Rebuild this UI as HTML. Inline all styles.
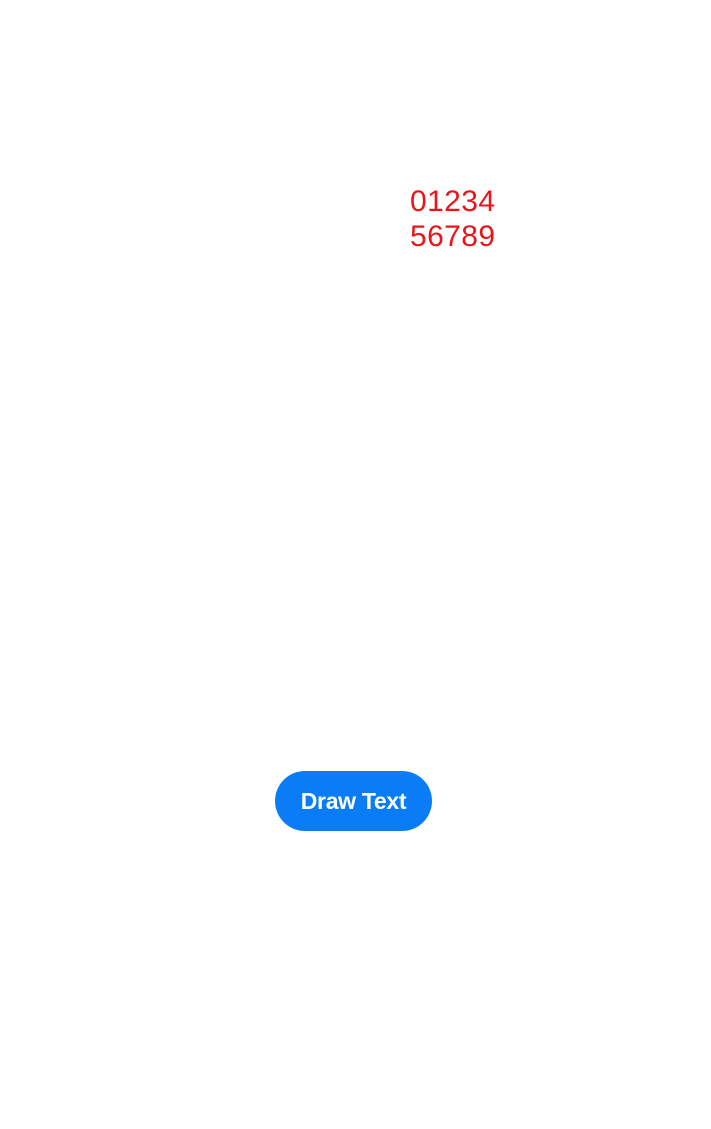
<!DOCTYPE html>
<html><head><style>
html,body{margin:0;padding:0;width:711px;height:1129px;background:#fff;overflow:hidden;font-family:"Liberation Sans",sans-serif}
.t{position:absolute;left:410px;top:184px;color:#e8161b;font-size:30px;line-height:35px;letter-spacing:0.4px}
.b{position:absolute;left:275px;top:771px;width:157px;height:60px;border-radius:30px;background:#0a7cf6;color:#fff;font-size:23px;font-weight:bold;line-height:60px;text-align:center;letter-spacing:-0.3px}
</style></head><body>
<div class="t">01234<br>56789</div>
<div class="b">Draw Text</div>
</body></html>
